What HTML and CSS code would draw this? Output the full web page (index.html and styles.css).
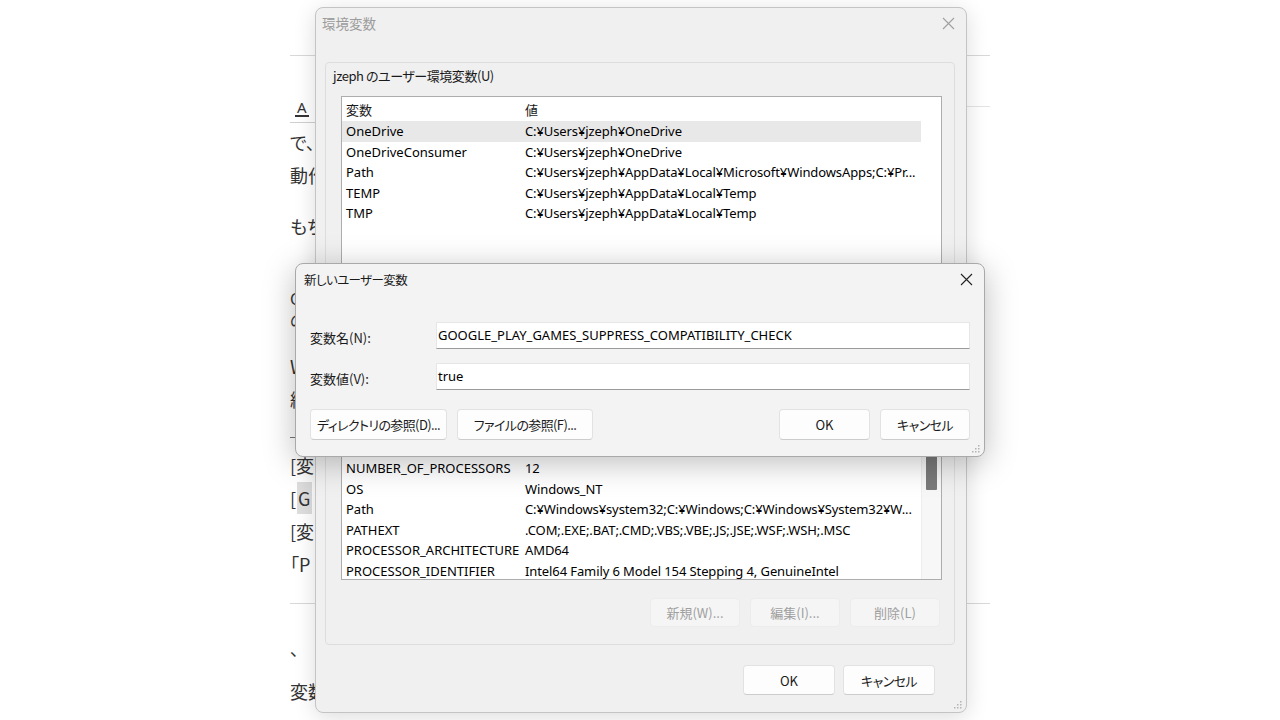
FILE: index.html
```html
<!DOCTYPE html>
<html lang="ja">
<head>
<meta charset="utf-8">
<title>環境変数</title>
<link rel="stylesheet" href="styles.css">
</head>
<body>
<div class="desktop">
  <article class="article">
    <div class="rule-top"></div>
    <div class="toolbar">
      <div class="tool-left"><span class="tool-a">A</span></div>
      <div class="tool-right"></div>
    </div>
    <p class="para p1">で、<br>動作</p>
    <p class="para p2">もち</p>
    <p class="para p3">CP<br>の</p>
    <p class="para p4">W<br>編</p>
    <div class="rule-mid"></div>
    <p class="para p5">[変<br>[<span class="code">G</span><br>[変<br>「P</p>
    <div class="rule-low"></div>
    <p class="para p6">、</p>
    <p class="para p7">変数</p>
  </article>

  <section class="win win-main">
    <header class="titlebar">
      <span class="title">環境変数</span>
      <span class="close"><svg width="13" height="13" viewBox="0 0 13 13"><path d="M1 1L12 12M12 1L1 12" stroke="currentColor" stroke-width="1.1" fill="none"/></svg></span>
    </header>
    <div class="win-body">
      <div class="group">
        <div class="group-label">jzeph のユーザー環境変数(U)</div>
        <div class="listview">
          <div class="lv-rows">
            <div class="lv-head"><span class="c1">変数</span><span class="c2">値</span></div>
            <div class="lv-row selected"><span class="c1">OneDrive</span><span class="c2">C:¥Users¥jzeph¥OneDrive</span></div>
            <div class="lv-row"><span class="c1">OneDriveConsumer</span><span class="c2">C:¥Users¥jzeph¥OneDrive</span></div>
            <div class="lv-row"><span class="c1">Path</span><span class="c2">C:¥Users¥jzeph¥AppData¥Local¥Microsoft¥WindowsApps;C:¥Pr...</span></div>
            <div class="lv-row"><span class="c1">TEMP</span><span class="c2">C:¥Users¥jzeph¥AppData¥Local¥Temp</span></div>
            <div class="lv-row"><span class="c1">TMP</span><span class="c2">C:¥Users¥jzeph¥AppData¥Local¥Temp</span></div>
          </div>
          <div class="lv-side"></div>
        </div>
        <div class="btn-row">
          <button class="btn btn-sm">新規(N)...</button>
          <button class="btn btn-sm">編集(E)...</button>
          <button class="btn btn-sm">削除(D)</button>
        </div>
      </div>

      <div class="group group-sys">
        <div class="group-label covered">システム環境変数(S)</div>
        <div class="listview">
          <div class="lv-rows">
            <div class="lv-head covered"><span class="c1">変数</span><span class="c2">値</span></div>
            <div class="lv-row covered"><span class="c1">ComSpec</span><span class="c2">C:¥WINDOWS¥system32¥cmd.exe</span></div>
            <div class="lv-row covered"><span class="c1">DriverData</span><span class="c2">C:¥Windows¥System32¥Drivers¥DriverData</span></div>
            <div class="lv-row"><span class="c1">NUMBER_OF_PROCESSORS</span><span class="c2">12</span></div>
            <div class="lv-row"><span class="c1">OS</span><span class="c2">Windows_NT</span></div>
            <div class="lv-row"><span class="c1">Path</span><span class="c2">C:¥Windows¥system32;C:¥Windows;C:¥Windows¥System32¥W...</span></div>
            <div class="lv-row"><span class="c1">PATHEXT</span><span class="c2">.COM;.EXE;.BAT;.CMD;.VBS;.VBE;.JS;.JSE;.WSF;.WSH;.MSC</span></div>
            <div class="lv-row"><span class="c1">PROCESSOR_ARCHITECTURE</span><span class="c2">AMD64</span></div>
            <div class="lv-row"><span class="c1">PROCESSOR_IDENTIFIER</span><span class="c2">Intel64 Family 6 Model 154 Stepping 4, GenuineIntel</span></div>
          </div>
          <div class="lv-side scrollbar"><div class="thumb"></div></div>
        </div>
        <div class="btn-row">
          <button class="btn btn-sm" disabled>新規(W)...</button>
          <button class="btn btn-sm" disabled>編集(I)...</button>
          <button class="btn btn-sm" disabled>削除(L)</button>
        </div>
      </div>

      <div class="footer">
        <button class="btn btn-ft">OK</button>
        <button class="btn btn-ft btn-kana">キャンセル</button>
      </div>
    </div>
    <span class="grip"><svg width="8" height="8" viewBox="0 0 8 8"><g fill="#b4b4b4"><rect x="6" y="0" width="1.5" height="1.5"/><rect x="3" y="3" width="1.5" height="1.5"/><rect x="6" y="3" width="1.5" height="1.5"/><rect x="0" y="6" width="1.5" height="1.5"/><rect x="3" y="6" width="1.5" height="1.5"/><rect x="6" y="6" width="1.5" height="1.5"/></g></svg></span>
  </section>

  <section class="win win-new">
    <header class="titlebar titlebar-new">
      <span class="title title-active">新しいユーザー変数</span>
      <span class="close close-active"><svg width="13" height="13" viewBox="0 0 13 13"><path d="M1 1L12 12M12 1L1 12" stroke="currentColor" stroke-width="1.1" fill="none"/></svg></span>
    </header>
    <div class="new-body">
      <div class="field">
        <label class="field-label">変数名(N):</label>
        <div class="input">GOOGLE_PLAY_GAMES_SUPPRESS_COMPATIBILITY_CHECK</div>
      </div>
      <div class="field field-2">
        <label class="field-label">変数値(V):</label>
        <div class="input">true</div>
      </div>
      <div class="new-buttons">
        <button class="btn btn-dir btn-kana">ディレクトリの参照(D)...</button>
        <button class="btn btn-file btn-kana">ファイルの参照(F)...</button>
        <span class="spacer"></span>
        <button class="btn btn-ok">OK</button>
        <button class="btn btn-cancel btn-kana">キャンセル</button>
      </div>
    </div>
    <span class="grip grip-new"><svg width="8" height="8" viewBox="0 0 8 8"><g fill="#b4b4b4"><rect x="6" y="0" width="1.5" height="1.5"/><rect x="3" y="3" width="1.5" height="1.5"/><rect x="6" y="3" width="1.5" height="1.5"/><rect x="0" y="6" width="1.5" height="1.5"/><rect x="3" y="6" width="1.5" height="1.5"/><rect x="6" y="6" width="1.5" height="1.5"/></g></svg></span>
  </section>
</div>
</body>
</html>
```

FILE: styles.css
```css
* { box-sizing: border-box; }
html, body { margin: 0; padding: 0; }
body {
  background: #ffffff;
  font-family: "Noto Sans", "Noto Sans CJK JP", sans-serif;
}
.desktop {
  position: relative;
  width: 1280px;
  height: 720px;
  overflow: hidden;
  background: #ffffff;
}

/* background article */
.article {
  width: 700px;
  margin-left: 290px;
  font-family: "Noto Sans CJK JP", "Noto Sans", sans-serif;
  font-size: 18px;
  color: #333333;
  font-feature-settings: "palt";
  white-space: nowrap;
  overflow: hidden;
}
.rule-top { margin-top: 55px; height: 1px; background: #d8d8d8; }
.toolbar { display: flex; height: 67px; }
.tool-left {
  width: 40px;
  border-bottom: 1px solid #cfcfcf;
  display: flex;
  align-items: flex-end;
  padding: 0 0 5px 5px;
}
.tool-a {
  font-family: "Noto Sans", sans-serif;
  font-size: 15px;
  line-height: 14px;
  color: #333;
  border-bottom: 2px solid #333;
  padding: 0 2px 1px;
}
.tool-right { flex: 1; height: 51px; border-bottom: 1px solid #e4e4e4; }
.para { margin: 0; line-height: 33px; }
.p1 { margin-top: 3px; }
.p2 { margin-top: 18px; }
.p3 { margin-top: 44px; font-size: 16px; line-height: 22px; }
.p4 { margin-top: 19px; }
.rule-mid { margin-top: 21px; height: 1px; background: #777; width: 30px; }
.p5 { margin-top: 11px; }
.code { background: #dedede; padding: 3px 1px; margin-left: 1px; }
.rule-low { margin-top: 22px; height: 1px; background: #d8d8d8; }
.p6 { margin-top: 28px; }
.p7 { margin-top: 10px; }

/* windows */
.win {
  position: absolute;
  border-radius: 8px;
  font-family: "Noto Sans", "Noto Sans CJK JP", sans-serif;
  font-feature-settings: "palt";
  font-size: 13px;
  color: #000;
}
.covered { visibility: hidden; }
.win-main {
  left: 315px;
  top: 7px;
  width: 652px;
  height: 706px;
  background: #f0f0f0;
  border: 1px solid #c4c4c4;
  box-shadow: 0 4px 22px rgba(0, 0, 0, 0.14);
}
.win-new {
  left: 295px;
  top: 263px;
  width: 690px;
  height: 194px;
  background: #f3f3f3;
  border: 1px solid #a9a9a9;
  box-shadow: 0 6px 32px rgba(0, 0, 0, 0.26);
}
.titlebar {
  height: 30px;
  display: flex;
  align-items: center;
  justify-content: space-between;
  padding-left: 6px;
}
.title {
  font-family: "Noto Sans CJK JP", sans-serif;
  font-size: 13.5px;
  color: #9c9c9c;
}
.title-active {
  color: #1a1a1a;
  font-size: 12.5px;
  letter-spacing: -0.6px;
  padding-left: 2px;
}
.close {
  width: 36px;
  height: 30px;
  display: flex;
  align-items: center;
  justify-content: center;
  color: #a0a0a0;
}
.close-active { color: #222; }

.win-body { padding: 24px 11px 0 9px; }
.group {
  border: 1px solid #dddddd;
  border-radius: 4px;
  padding: 5px 12px 17px 15px;
}
.group-sys { margin-top: 9px; }
.group-label {
  font-family: "Noto Sans CJK JP", sans-serif;
  line-height: 16px;
  margin-left: -8px;
  letter-spacing: -0.45px;
  color: #1a1a1a;
}
.listview {
  margin-top: 12px;
  height: 188px;
  background: #ffffff;
  border: 1px solid #adadad;
  display: flex;
  overflow: hidden;
}
.lv-rows { width: 579px; flex: none; }
.lv-side { flex: 1; }
.lv-head, .lv-row {
  display: flex;
  align-items: center;
  white-space: nowrap;
}
.lv-head { height: 24px; }
.lv-row { height: 20.5px; }
.lv-row.selected { background: #e8e8e8; }
.c1 { width: 179px; flex: none; padding-left: 4px; overflow: hidden; }
.c2 { flex: 1; padding-left: 4px; overflow: hidden; letter-spacing: -0.1px; }
.lv-head .c1, .lv-head .c2 { font-family: "Noto Sans CJK JP", sans-serif; color: #1a1a1a; }
.scrollbar {
  background: #f7f7f7;
  border-left: 1px solid #eeeeee;
  padding: 40px 4px 0 4px;
}
.thumb { height: 57px; background: #7a7a7a; border-radius: 1px; }

.btn-row {
  margin-top: 18px;
  display: flex;
  justify-content: flex-end;
  gap: 10px;
  padding-right: 2px;
}
.btn {
  font-family: "Noto Sans CJK JP", "Noto Sans", sans-serif;
  font-feature-settings: "palt";
  font-size: 13px;
  color: #1a1a1a;
  background: #fdfdfd;
  border: 1px solid #e2e2e2;
  border-bottom-color: #cccccc;
  border-radius: 4px;
  padding: 0;
  display: flex;
  align-items: center;
  justify-content: center;
}
.btn-kana { letter-spacing: -0.6px; }
.btn-sm { width: 90px; height: 29px; }
.btn:disabled {
  background: #f5f5f5;
  border-color: #ececec;
  color: #9f9f9f;
}
.footer {
  margin-top: 20px;
  display: flex;
  justify-content: flex-end;
  gap: 8px;
  padding-right: 20px;
}
.btn-ft { width: 92px; height: 30px; }
.grip { position: absolute; right: 4px; bottom: 3px; line-height: 0; }
.grip-new { right: 4px; bottom: 3px; }

/* new variable dialog */
.titlebar-new { height: 31px; }
.new-body { padding: 27px 14px 0 14px; }
.field { display: flex; align-items: center; height: 27px; }
.field-2 { margin-top: 14px; }
.field-label {
  width: 126px;
  flex: none;
  font-family: "Noto Sans CJK JP", sans-serif;
  padding-top: 3px;
  color: #1a1a1a;
}
.input {
  flex: 1;
  height: 27px;
  background: #ffffff;
  border: 1px solid #e6e6e6;
  border-bottom: 1px solid #9a9a9a;
  padding-left: 1px;
  line-height: 24px;
  font-family: "Noto Sans", sans-serif;
  white-space: nowrap;
}
.new-buttons {
  margin-top: 19px;
  display: flex;
  gap: 10px;
  height: 31px;
}
.new-buttons .btn { height: 31px; }
.btn-dir { width: 137px; }
.btn-file { width: 136px; }
.spacer { flex: 1; }
.btn-ok { width: 91px; }
.btn-cancel { width: 90px; }
```
